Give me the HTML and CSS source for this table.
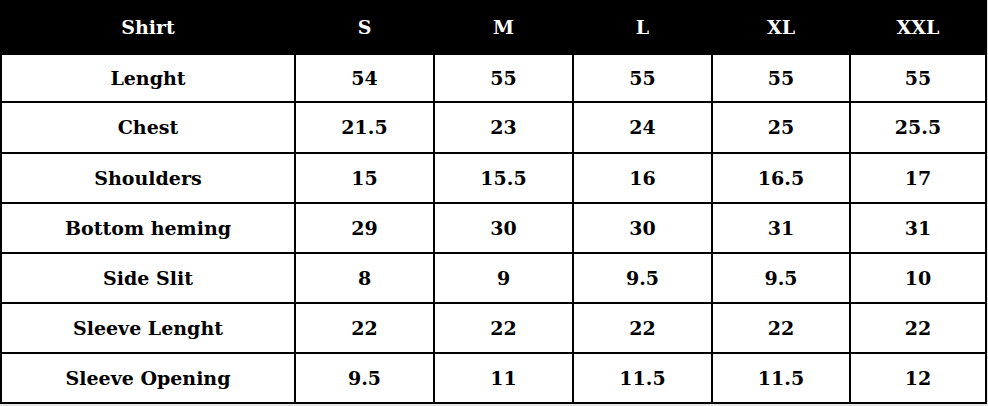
FILE: index.html
```html
<!DOCTYPE html>
<html lang="en">
<head>
<meta charset="utf-8">
<title>Shirt size chart</title>
<link rel="stylesheet" href="styles.css">
</head>
<body>
<table class="size-table">
  <colgroup>
    <col class="col-label">
    <col class="col-s"><col class="col-m"><col class="col-l"><col class="col-xl"><col class="col-xxl">
  </colgroup>
  <thead>
    <tr class="head-row">
      <th>Shirt</th><th>S</th><th>M</th><th>L</th><th>XL</th><th>XXL</th>
    </tr>
  </thead>
  <tbody>
    <tr><td>Lenght</td><td>54</td><td>55</td><td>55</td><td>55</td><td>55</td></tr>
    <tr><td>Chest</td><td>21.5</td><td>23</td><td>24</td><td>25</td><td>25.5</td></tr>
    <tr><td>Shoulders</td><td>15</td><td>15.5</td><td>16</td><td>16.5</td><td>17</td></tr>
    <tr><td>Bottom heming</td><td>29</td><td>30</td><td>30</td><td>31</td><td>31</td></tr>
    <tr><td>Side Slit</td><td>8</td><td>9</td><td>9.5</td><td>9.5</td><td>10</td></tr>
    <tr><td>Sleeve Lenght</td><td>22</td><td>22</td><td>22</td><td>22</td><td>22</td></tr>
    <tr><td>Sleeve Opening</td><td>9.5</td><td>11</td><td>11.5</td><td>11.5</td><td>12</td></tr>
  </tbody>
</table>
</body>
</html>
```

FILE: styles.css
```css
html, body {
  margin: 0;
  padding: 0;
}
body {
  background: #e4e4e4;
  width: 988px;
  height: 406px;
  overflow: hidden;
}
.size-table {
  width: 987px;
  table-layout: fixed;
  border-collapse: collapse;
  background: #fff;
  font-family: "DejaVu Serif", "Liberation Serif", serif;
  font-weight: bold;
  font-size: 19px;
  color: #000;
}
.col-label { width: 294px; }
.col-s, .col-m, .col-l { width: 139px; }
.col-xl { width: 138px; }
.col-xxl { width: 136px; }
.size-table th,
.size-table td {
  border: 2px solid #000;
  text-align: center;
  vertical-align: middle;
  padding: 0;
  line-height: 1.2;
}
.head-row th {
  background: #000;
  color: #fff;
  height: 51px;
}
.size-table tbody td {
  height: 48px;
}
.size-table tbody tr:first-child td {
  height: 46px;
}
.size-table tbody tr:nth-child(2) td {
  height: 49px;
}
```
